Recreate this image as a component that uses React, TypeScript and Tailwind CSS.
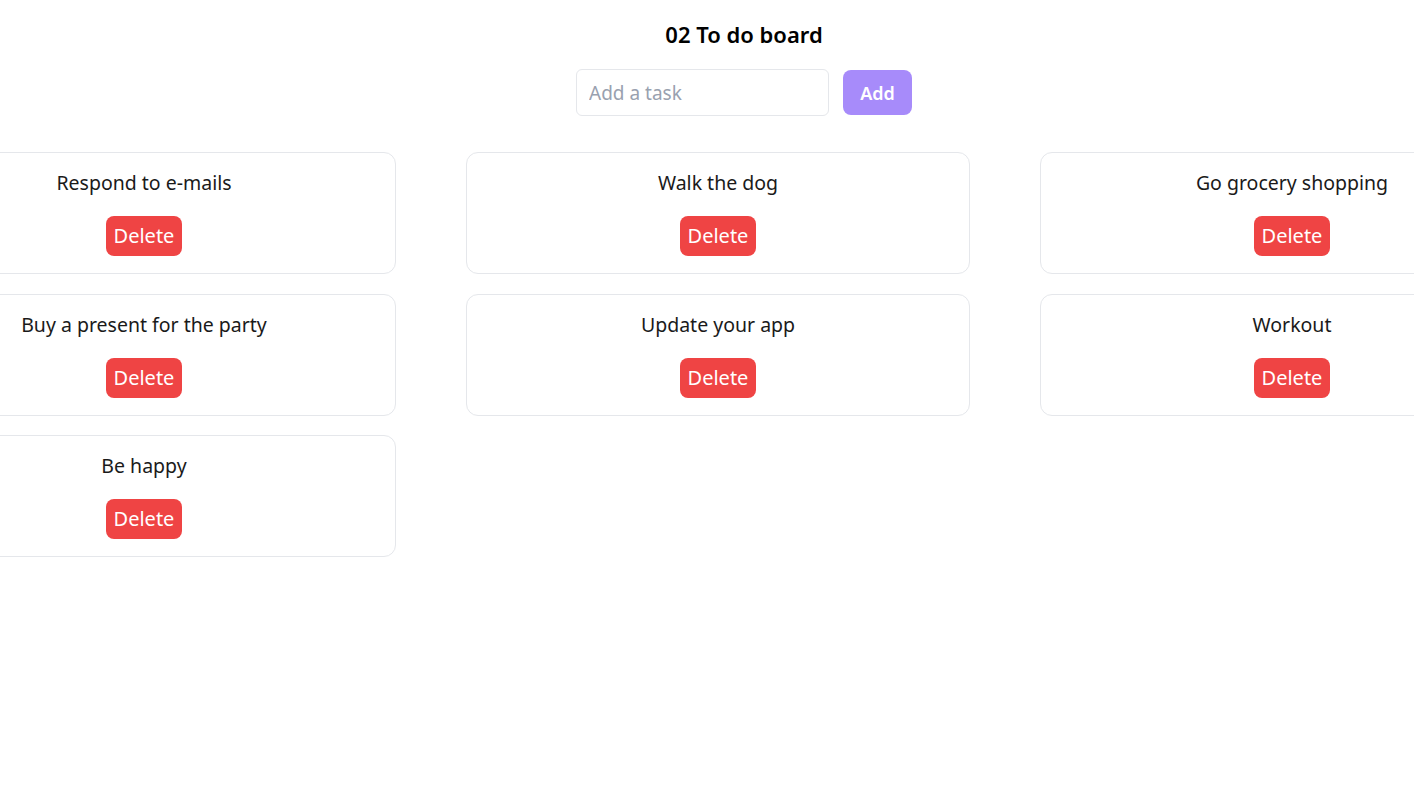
import { useState } from 'react';

const initialTasks = [
  'Respond to e-mails',
  'Walk the dog',
  'Go grocery shopping',
  'Buy a present for the party',
  'Update your app',
  'Workout',
  'Be happy',
];

export default function App() {
  const [tasks, setTasks] = useState(initialTasks);
  const [draft, setDraft] = useState('');

  const addTask = () => {
    if (!draft.trim()) return;
    setTasks([...tasks, draft.trim()]);
    setDraft('');
  };

  return (
    <div
      className="min-h-screen w-full overflow-hidden bg-white text-gray-900"
      style={{ fontFamily: '"Noto Sans", "Open Sans", sans-serif' }}
    >
      <header className="flex flex-col items-center pl-[74px] pt-[18px]">
        <h1 className="text-[22px] font-semibold leading-8 text-black">02 To do board</h1>
        <div className="mt-[19px] flex items-center gap-[14px]">
          <input
            value={draft}
            onChange={(e) => setDraft(e.target.value)}
            placeholder="Add a task"
            className="h-[47px] w-[253px] rounded-md border border-[#e5e7eb] px-3 text-[19px] text-gray-900 placeholder:text-gray-400 outline-none"
          />
          <button
            onClick={addTask}
            className="h-[45px] w-[69px] rounded-lg bg-[#a78bfa] text-lg font-semibold text-white"
          >
            Add
          </button>
        </div>
      </header>

      <ul className="ml-[-108px] mt-[36px] grid w-[1652px] grid-cols-3 gap-x-[70px] gap-y-[19.5px]">
        {tasks.map((task, i) => (
          <li
            key={task + i}
            className="flex flex-col items-center gap-[19px] rounded-xl border border-[#e5e7eb] px-4 pb-[17px] pt-4"
          >
            <p className="text-[19.5px] leading-7 text-[#1a1a1a]">{task}</p>
            <button
              onClick={() => setTasks(tasks.filter((_, j) => j !== i))}
              className="h-10 rounded-lg bg-[#ef4444] px-2 text-xl leading-7 text-white"
            >
              Delete
            </button>
          </li>
        ))}
      </ul>
    </div>
  );
}
